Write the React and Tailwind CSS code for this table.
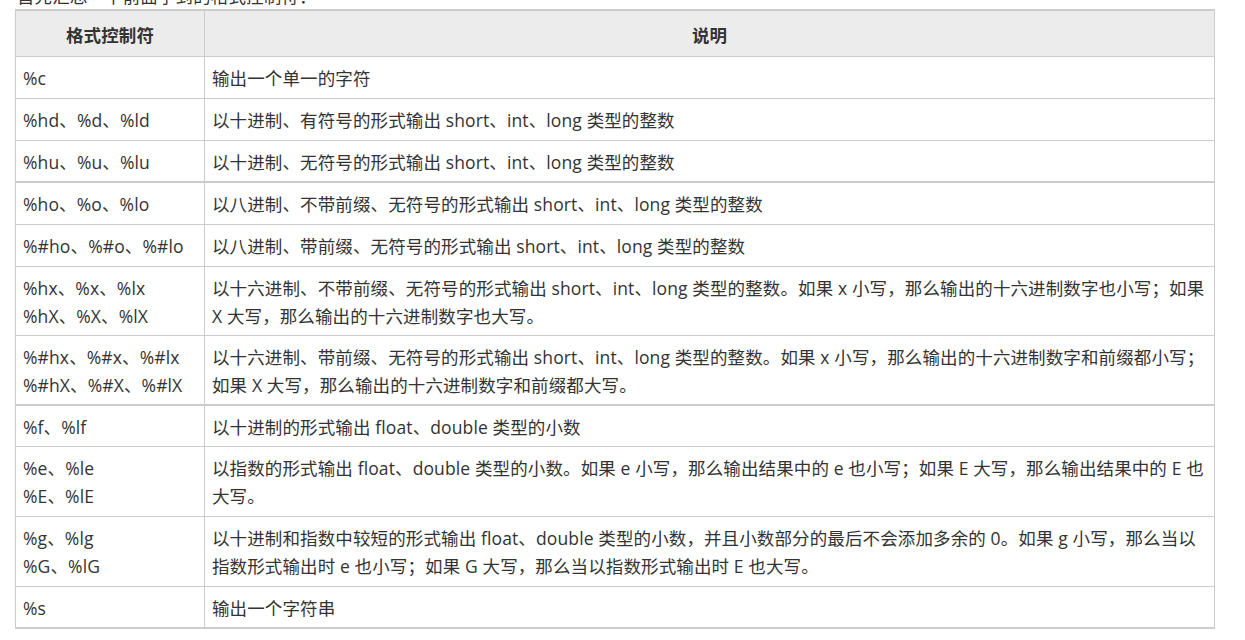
import React from "react";

const rows = [
  { f: ["%c"], d: ["输出一个单一的字符"] },
  { f: ["%hd、%d、%ld"], d: ["以十进制、有符号的形式输出 short、int、long 类型的整数"] },
  { f: ["%hu、%u、%lu"], d: ["以十进制、无符号的形式输出 short、int、long 类型的整数"], thick: true },
  { f: ["%ho、%o、%lo"], d: ["以八进制、不带前缀、无符号的形式输出 short、int、long 类型的整数"] },
  { f: ["%#ho、%#o、%#lo"], d: ["以八进制、带前缀、无符号的形式输出 short、int、long 类型的整数"] },
  {
    f: ["%hx、%x、%lx", "%hX、%X、%lX"],
    d: [
      "以十六进制、不带前缀、无符号的形式输出 short、int、long 类型的整数。如果 x 小写，那么输出的十六进制数字也小写；如果",
      "X 大写，那么输出的十六进制数字也大写。",
    ],
    tight: true,
  },
  {
    f: ["%#hx、%#x、%#lx", "%#hX、%#X、%#lX"],
    d: [
      "以十六进制、带前缀、无符号的形式输出 short、int、long 类型的整数。如果 x 小写，那么输出的十六进制数字和前缀都小写；",
      "如果 X 大写，那么输出的十六进制数字和前缀都大写。",
    ],
    thick: true,
  },
  { f: ["%f、%lf"], d: ["以十进制的形式输出 float、double 类型的小数"], tight: true },
  {
    f: ["%e、%le", "%E、%lE"],
    d: [
      "以指数的形式输出 float、double 类型的小数。如果 e 小写，那么输出结果中的 e 也小写；如果 E 大写，那么输出结果中的 E 也",
      "大写。",
    ],
  },
  {
    f: ["%g、%lg", "%G、%lG"],
    d: [
      "以十进制和指数中较短的形式输出 float、double 类型的小数，并且小数部分的最后不会添加多余的 0。如果 g 小写，那么当以",
      "指数形式输出时 e 也小写；如果 G 大写，那么当以指数形式输出时 E 也大写。",
    ],
  },
  { f: ["%s"], d: ["输出一个字符串"], last: true },
];

function Lines({ items }) {
  return items.map((t, i) => (
    <div key={i} className="whitespace-nowrap">
      {t}
    </div>
  ));
}

export default function App() {
  return (
    <div
      className="bg-white w-[1245px] h-[640px] overflow-hidden text-[#333] text-[17.5px] leading-[28px] tracking-[0.12px]"
      style={{ fontFamily: '"Open Sans", "Noto Sans CJK SC", sans-serif' }}
    >
      <p className="h-[27px] -mt-[18px] pl-[17px] whitespace-nowrap">首先汇总一下前面学到的格式控制符：</p>
      <table className="ml-[15px] w-[1200px] table-fixed border-separate border-spacing-0 border-l border-t-2 border-[#cccccc]">
        <colgroup>
          <col className="w-[189px]" />
          <col />
        </colgroup>
        <thead>
          <tr className="bg-[#ececec]">
            <th className="border-r border-b border-[#cccccc] pt-[10px] pb-[7px] px-[7px] font-bold text-center">格式控制符</th>
            <th className="border-r border-b border-[#cccccc] pt-[10px] pb-[7px] px-[7px] font-bold text-center">说明</th>
          </tr>
        </thead>
        <tbody>
          {rows.map((r, i) => {
            const b =
              r.thick || r.last
                ? "border-b-2 pb-[5px]"
                : r.tight
                ? "border-b pb-[5px]"
                : "border-b pb-[6px]";
            return (
              <tr key={i}>
                <td className={`border-r ${b} border-[#cccccc] pt-[7px] px-[7px] align-top text-left font-normal`}>
                  <Lines items={r.f} />
                </td>
                <td className={`border-r ${b} border-[#cccccc] pt-[7px] px-[7px] align-top text-left font-normal`}>
                  <Lines items={r.d} />
                </td>
              </tr>
            );
          })}
        </tbody>
      </table>
    </div>
  );
}
